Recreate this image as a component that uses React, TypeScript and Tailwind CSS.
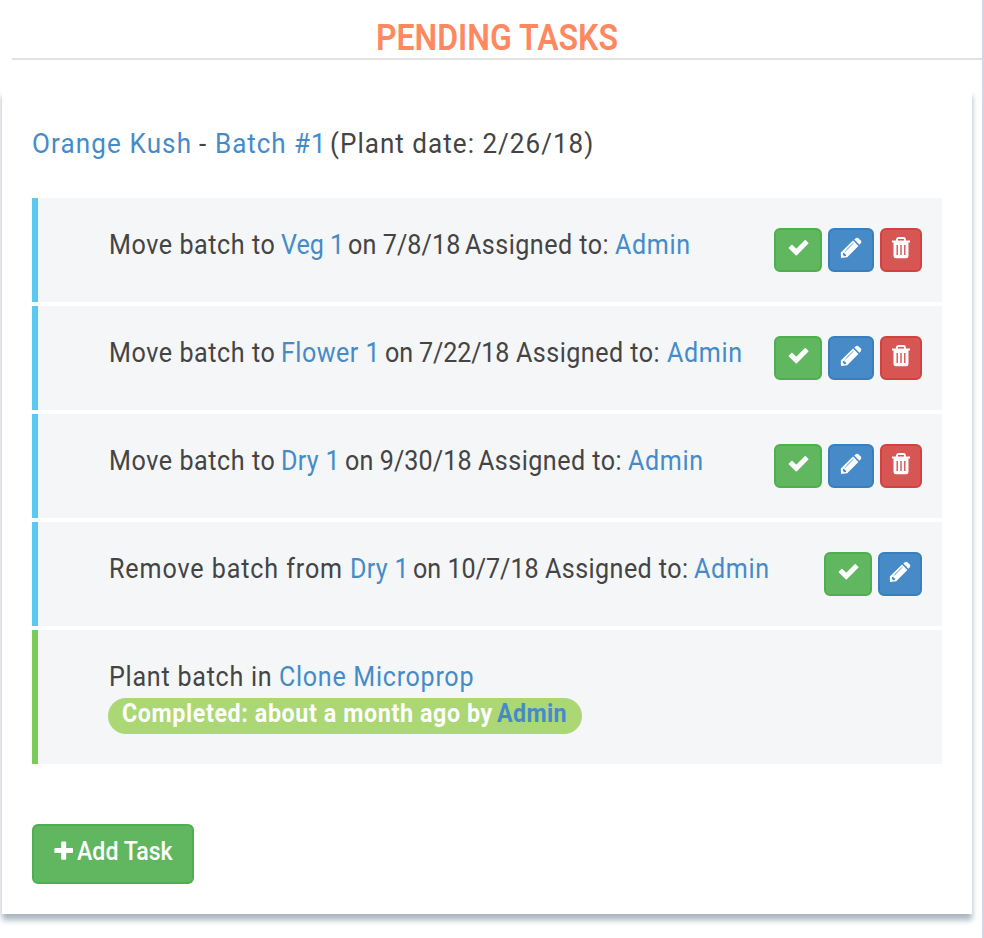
import React from "react";

type Segment = { text: string; box: string; link?: boolean };
type Task = { segments: Segment[]; removable?: boolean };

const tasks: Task[] = [
  {
    removable: true,
    segments: [
      { text: "Move batch to", box: "w-[172px] tracking-[0.6px]" },
      { text: "Veg 1", box: "w-[67px] tracking-[0]", link: true },
      { text: "on 7/8/18", box: "w-[117px] tracking-[0.1px]" },
      { text: "Assigned to:", box: "w-[150px] tracking-[0.5px]" },
      { text: "Admin", box: "w-[76px] tracking-[0.7px]", link: true },
    ],
  },
  {
    removable: true,
    segments: [
      { text: "Move batch to", box: "w-[172px] tracking-[0.6px]" },
      { text: "Flower 1", box: "w-[104px] tracking-[0.5px]", link: true },
      { text: "on 7/22/18", box: "w-[131px] tracking-[-0.15px]" },
      { text: "Assigned to:", box: "w-[151px] tracking-[0.5px]" },
      { text: "Admin", box: "w-[76px] tracking-[0.7px]", link: true },
    ],
  },
  {
    removable: true,
    segments: [
      { text: "Move batch to", box: "w-[172px] tracking-[0.6px]" },
      { text: "Dry 1", box: "w-[64px] tracking-[0.3px]", link: true },
      { text: "on 9/30/18", box: "w-[133px] tracking-[0.1px]" },
      { text: "Assigned to:", box: "w-[150px] tracking-[0.5px]" },
      { text: "Admin", box: "w-[76px] tracking-[0.7px]", link: true },
    ],
  },
  {
    segments: [
      { text: "Remove batch from", box: "w-[241px] tracking-[0.95px]" },
      { text: "Dry 1", box: "w-[63px] tracking-[0.3px]", link: true },
      { text: "on 10/7/18", box: "w-[132px] tracking-[0]" },
      { text: "Assigned to:", box: "w-[149px] tracking-[0.45px]" },
      { text: "Admin", box: "w-[76px] tracking-[0.7px]", link: true },
    ],
  },
];

function Line({ segments, size = "text-[27px]" }: { segments: Segment[]; size?: string }) {
  return (
    <div className={`flex h-9 items-center whitespace-nowrap leading-9 ${size}`}>
      {segments.map((s, i) => (
        <span key={i} className={`shrink-0 ${s.box} ${s.link ? "text-[#468bc8]" : ""}`}>
          <span className="inline-block origin-left scale-x-[0.93]">{s.text}</span>
        </span>
      ))}
    </div>
  );
}

function CheckIcon() {
  return (
    <svg width="23" height="19" viewBox="0 0 23 19">
      <path
        d="M2.400 10 4.900 7.600 9.300 11.800 18.200 2.900 20.700 5.300 9.300 16.700Z"
        fill="#fff"
        stroke="#fff"
        strokeWidth="1.600"
        strokeLinejoin="round"
      />
    </svg>
  );
}

function PencilIcon() {
  return (
    <svg width="22" height="22" viewBox="0 0 22 22">
      <path d="M13.100 3.600 18.400 8.900 7.200 20.200 1 21 .8 15.400ZM14.300 2.600 15.800 1.200Q17.200.1 18.700 1.400L20.800 3.500Q22 4.900 20.800 6.200L19.400 7.700Z" fill="#fff" />
      <path d="m5.300 14.200 8.200-8.200" stroke="#468bc8" strokeWidth=".9" />
      <path d="m3 16.300 1.100-.7.800 1.500 1.500.7-.7 1.300-1.500.1-1.300-1.400Z" fill="#468bc8" />
    </svg>
  );
}

function TrashIcon() {
  return (
    <svg width="20" height="22" viewBox="0 0 20 22">
      <path d="M6 4V2.500Q6 1 7.500 1h5Q14 1 14 2.500V4" fill="none" stroke="#fff" strokeWidth="1.800" />
      <path d="M1 3.600h18v2H1ZM2.500 5.500h15V19q0 2.300-2.300 2.300H4.800Q2.500 21.300 2.500 19Z" fill="#fff" />
      <path d="M6.200 8v10M10 8v10M13.800 8v10" stroke="#d9534f" strokeWidth="1.400" />
    </svg>
  );
}

function Actions({ removable }: { removable?: boolean }) {
  return (
    <div className="mt-[30px] flex h-11 shrink-0 gap-1.5">
      <button className="flex w-12 items-start justify-center rounded-[6px] border-2 border-[#4fae50] bg-[#60b760] pt-[8px]">
        <CheckIcon />
      </button>
      <button className={`flex items-start justify-center rounded-[6px] border-2 border-[#387fbc] bg-[#468bc8] pt-[7px] ${removable ? "w-[46px]" : "w-11"}`}>
        <PencilIcon />
      </button>
      {removable && (
        <button className="flex w-[42px] items-start justify-center rounded-[6px] border-2 border-[#d2423e] bg-[#d75552] pt-[7px]">
          <TrashIcon />
        </button>
      )}
    </div>
  );
}

export default function App() {
  return (
    <main className="h-[938px] w-[984px] overflow-hidden border-r-2 border-[#d3d8e0] bg-white font-[Roboto,sans-serif] text-[#444]">
      <header className="ml-3 flex h-[60px] justify-center border-b-2 border-[#e1e1e1] pt-[18px]">
        <h1 className="whitespace-nowrap text-[36px] font-semibold leading-10 text-[#ff8860]">
          <span className="inline-block origin-center scale-x-[0.89]">PENDING TASKS</span>
        </h1>
      </header>
      <section className="ml-0.5 mt-[30px] h-[824px] w-[970px] bg-white px-[30px] pt-9 shadow-[0_6px_6px_#a9b4c0]">
        <Line
          size="text-[28px]"
          segments={[
            { text: "Orange Kush", box: "w-[167px] tracking-[1.2px]", link: true },
            { text: "-", box: "w-[16px] tracking-[0]" },
            { text: "Batch #1", box: "w-[115px] tracking-[1px]", link: true },
            { text: "(Plant date: 2/26/18)", box: "w-[264px] tracking-[1.1px]" },
          ]}
        />
        <ul className="mt-9 flex flex-col gap-1">
          {tasks.map((t, i) => (
            <li key={i} className="flex h-[104px] justify-between border-l-[6px] border-[#5bc8f2] bg-[#f4f6f8] pl-[71px] pr-5">
              <div className="pt-[29px]">
                <Line segments={t.segments} />
              </div>
              <Actions removable={t.removable} />
            </li>
          ))}
          <li className="h-[134px] border-l-[6px] border-[#7bcb5b] bg-[#f4f6f8] pl-[70px] pt-[29px]">
            <div className="pl-px">
              <Line
                segments={[
                  { text: "Plant batch in", box: "w-[170px] tracking-[0.8px]" },
                  { text: "Clone Microprop", box: "w-[196px] tracking-[0.75px]", link: true },
                ]}
              />
            </div>
            <div className="mt-[3px] flex h-9 w-[474px] whitespace-nowrap rounded-full bg-[#abd775] pl-3.5 text-[25px] font-bold leading-8 text-white">
              <span className="w-[375px] shrink-0">
                <span className="inline-block origin-left scale-x-[0.93] tracking-[0.66px]">Completed: about a month ago by</span>
              </span>
              <span className="shrink-0 text-[#468bc8]">
                <span className="inline-block origin-left scale-x-[0.93] tracking-[0.4px]">Admin</span>
              </span>
            </div>
          </li>
        </ul>
        <button className="mt-[60px] flex h-[60px] w-[162px] items-start rounded-[6px] border-2 border-[#4fae50] bg-[#60b760] pl-5 pt-[9px] text-[26px] font-medium leading-8 text-white">
          <svg width="20" height="20" viewBox="0 0 20 20" className="mt-[6px] shrink-0">
            <path
              d="M8 1.300h3.400v6.500h6.800v3.400h-6.800V18H8v-6.800H1.200V7.800H8Z"
              fill="#fff"
              stroke="#fff"
              strokeWidth="1.600"
              strokeLinejoin="round"
            />
          </svg>
          <span className="ml-[3px] inline-block origin-left scale-x-[0.89] whitespace-nowrap">Add Task</span>
        </button>
      </section>
    </main>
  );
}
